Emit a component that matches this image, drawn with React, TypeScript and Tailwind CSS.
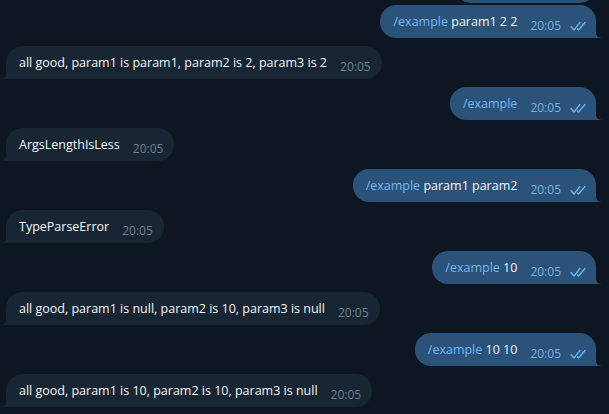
import type { ReactNode } from 'react';

type Msg = { out: boolean; cmd?: string; text?: string };

const messages: Msg[] = [
  { out: true, cmd: '/example', text: 'param1 2 2' },
  { out: false, text: 'all good, param1 is param1, param2 is 2, param3 is 2' },
  { out: true, cmd: '/example' },
  { out: false, text: 'ArgsLengthIsLess' },
  { out: true, cmd: '/example', text: 'param1 param2' },
  { out: false, text: 'TypeParseError' },
  { out: true, cmd: '/example', text: '10' },
  { out: false, text: 'all good, param1 is null, param2 is 10, param3 is null' },
  { out: true, cmd: '/example', text: '10 10' },
  { out: false, text: 'all good, param1 is 10, param2 is 10, param3 is null' },
];

const DoubleCheck = () => (
  <svg width="17" height="11" viewBox="0 0 17 11" fill="none" className="ml-[9px] mb-[2px] shrink-0">
    <path d="M1 5.5 L4 9 L10 1.5" stroke="#6cb4ee" strokeWidth="1.4" strokeLinecap="round" strokeLinejoin="round" />
    <path d="M7.5 8 L8.5 9 L15 1.5" stroke="#6cb4ee" strokeWidth="1.4" strokeLinecap="round" strokeLinejoin="round" />
  </svg>
);

const Tail = ({ out }: { out: boolean }) =>
  out ? (
    <svg width="7" height="10" viewBox="0 0 7 10" className="absolute bottom-0 right-[-6px]">
      <path d="M0 0 Q0 10 7 10 L0 10 Z" fill="#2b5278" />
    </svg>
  ) : (
    <svg width="7" height="10" viewBox="0 0 7 10" className="absolute bottom-0 left-[-6px]">
      <path d="M7 0 Q7 10 0 10 L7 10 Z" fill="#182533" />
    </svg>
  );

const Bubble = ({ msg, children }: { msg: Msg; children: ReactNode }) => (
  <div
    className={
      'relative flex items-end pl-[13px] pt-[8px] pb-[4px] rounded-[16px] ' +
      (msg.out ? 'bg-[#2b5278] pr-[9px] rounded-br-none' : 'bg-[#182533] pr-[11px] rounded-bl-none')
    }
  >
    {children}
    <Tail out={msg.out} />
  </div>
);

export default function App() {
  return (
    <div
      className="h-[414px] w-[609px] overflow-hidden bg-[#0e1621] flex flex-col justify-end gap-[8px] pb-[7px] pl-[6px] pr-[13px] text-[#f5f5f5]"
      style={{ fontFamily: '"Open Sans", "Liberation Sans", sans-serif' }}
    >
      {/* previous message, scrolled out of view */}
      <div className="flex justify-end -mb-[6px]">
        <div className="h-[33px] w-[141px] rounded-[16px] bg-[#2b5278]" />
      </div>
      {messages.map((m, i) => (
        <div key={i} className={'flex ' + (m.out ? 'justify-end' : 'justify-start')}>
          <Bubble msg={m}>
            <span className="text-[12.5px] leading-[18px] mb-[3px] whitespace-nowrap">
              {m.cmd && <span className="text-[#71b8f5]">{m.cmd}</span>}
              {m.cmd && m.text ? ' ' : ''}
              {m.text}
            </span>
            <span
              className={
                'text-[12px] leading-[16px] ml-[13px] whitespace-nowrap ' +
                (m.out ? 'text-[#7eb0dd]' : 'text-[#6d7f8f]')
              }
            >
              20:05
            </span>
            {m.out && <DoubleCheck />}
          </Bubble>
        </div>
      ))}
    </div>
  );
}
